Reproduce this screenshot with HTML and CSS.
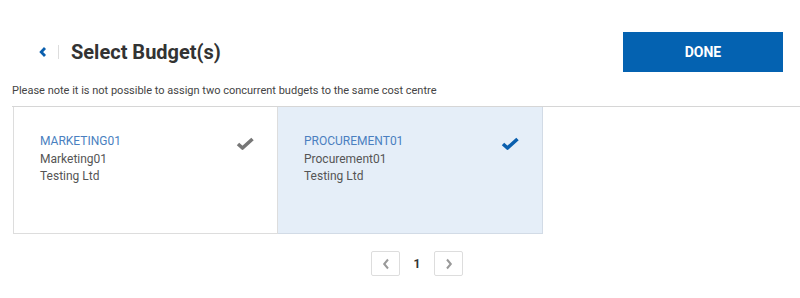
FILE: index.html
```html
<!DOCTYPE html>
<html lang="en">
<head>
    <meta charset="UTF-8">
    <meta name="viewport" content="width=device-width, initial-scale=1.0">
    <title>Select Budget(s)</title>
    <link rel="stylesheet" href="styles.css">
</head>
<body>
    <div class="header">
        <div class="title-group">
            <a class="back" href="#">
                <svg width="8" height="10" viewBox="0 0 8 10"><path d="M6 1 L2.2 5 L6 9" fill="none" stroke="#0a5fae" stroke-width="2.8"/></svg>
            </a>
            <span class="divider"></span>
            <h1>Select Budget(s)</h1>
        </div>
        <button class="done">DONE</button>
    </div>

    <p class="note">Please note it is not possible to assign two concurrent budgets to the same cost centre</p>

    <div class="list">
        <div class="card">
            <div class="code">MARKETING01</div>
            <div>Marketing01</div>
            <div>Testing Ltd</div>
            <svg class="check" width="18" height="13" viewBox="0 0 18 13"><path d="M2 7 L6.5 11 L16.5 2" fill="none" stroke="#777" stroke-width="3.6" stroke-linejoin="round"/></svg>
        </div>
        <div class="card selected">
            <div class="code">PROCUREMENT01</div>
            <div>Procurement01</div>
            <div>Testing Ltd</div>
            <svg class="check" width="18" height="13" viewBox="0 0 18 13"><path d="M2 7 L6.5 11 L16.5 2" fill="none" stroke="#0a5fae" stroke-width="3.6" stroke-linejoin="round"/></svg>
        </div>
    </div>

    <div class="pager">
        <button class="page-btn">
            <svg width="8" height="12" viewBox="0 0 8 12"><path d="M6 1.5 L2.2 6 L6 10.5" fill="none" stroke="#999" stroke-width="2"/></svg>
        </button>
        <span class="page-num">1</span>
        <button class="page-btn">
            <svg width="8" height="12" viewBox="0 0 8 12"><path d="M2 1.5 L5.8 6 L2 10.5" fill="none" stroke="#999" stroke-width="2"/></svg>
        </button>
    </div>
</body>
</html>
```

FILE: styles.css
```css
body {
    margin: 0;
    font-family: 'Roboto', 'Liberation Sans', sans-serif;
    background-color: #fff;
    color: #444;
}
.header {
    display: flex;
    justify-content: space-between;
    align-items: center;
    padding: 32px 17px 0 39px;
    height: 40px;
}
.title-group {
    display: flex;
    align-items: center;
}
.back {
    display: flex;
    align-items: center;
    width: 10px;
}
.divider {
    width: 1px;
    height: 14px;
    background-color: #ddd;
    margin: 0 11px 0 9px;
}
h1 {
    margin: 0 0 0 1px;
    font-size: 20px;
    font-weight: 700;
    color: #333;
}
.done {
    width: 160px;
    height: 40px;
    border: none;
    background-color: #0462b1;
    color: #fff;
    font-family: inherit;
    font-size: 14px;
    font-weight: 700;
}
.note {
    margin: 12px 0 0 12px;
    font-size: 11px;
    line-height: 14px;
    color: #444;
}
.list {
    display: flex;
    margin: 8px 0 0 12px;
    border-top: 1px solid #d6d6d6;
}
.card {
    position: relative;
    box-sizing: border-box;
    width: 265px;
    height: 127px;
    padding: 26px 26px;
    border: 1px solid #ddd;
    border-top: none;
    font-size: 12px;
    line-height: 17.5px;
    color: #555;
    background-color: #fff;
}
.card:first-child {
    margin-left: 1px;
}
.card + .card {
    border-left: none;
}
.card.selected {
    background-color: #e5eef8;
    border-color: #d2dbe6;
}
.code {
    color: #4a7fc0;
}
.check {
    position: absolute;
    top: 30px;
    right: 23px;
}
.pager {
    display: flex;
    align-items: center;
    margin: 17px 0 0 371px;
}
.page-btn {
    display: flex;
    align-items: center;
    justify-content: center;
    width: 29px;
    height: 25px;
    padding: 0;
    border: 1px solid #ddd;
    border-radius: 2px;
    background-color: #fff;
}
.page-num {
    width: 34px;
    text-align: center;
    font-size: 12px;
    font-weight: 700;
    color: #333;
}
```
